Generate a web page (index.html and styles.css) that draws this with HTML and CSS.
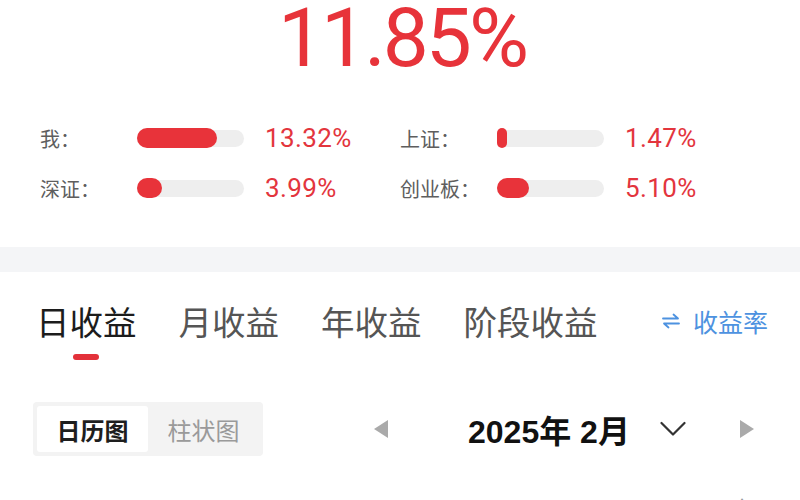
FILE: index.html
```html
<!DOCTYPE html>
<html lang="zh-CN">
<head>
<meta charset="utf-8">
<link rel="stylesheet" href="styles.css">
</head>
<body>
<div class="page">
  <section class="hero">
    <div class="big">11.85%</div>
    <div class="stats">
      <div class="stat">
        <span class="label">我：</span>
        <span class="track"><span class="fill" style="width:80px"></span></span>
        <span class="value">13.32%</span>
      </div>
      <div class="stat">
        <span class="label">上证：</span>
        <span class="track"><span class="fill" style="width:10px"></span></span>
        <span class="value">1.47%</span>
      </div>
      <div class="stat">
        <span class="label">深证：</span>
        <span class="track"><span class="fill" style="width:25px"></span></span>
        <span class="value">3.99%</span>
      </div>
      <div class="stat">
        <span class="label">创业板：</span>
        <span class="track"><span class="fill" style="width:32px"></span></span>
        <span class="value">5.10%</span>
      </div>
    </div>
  </section>
  <div class="band"></div>
  <section class="tabs">
    <div class="tab active">日收益<span class="indicator"></span></div>
    <div class="tab">月收益</div>
    <div class="tab">年收益</div>
    <div class="tab">阶段收益</div>
    <div class="switch">
      <svg class="swap" width="20" height="16" viewBox="0 0 20 16">
        <path d="M2 5.5 H17 L12.5 1.5" fill="none" stroke="currentColor" stroke-width="1.8" stroke-linecap="round" stroke-linejoin="round"/>
        <path d="M18 10.5 H3 L7.5 14.5" fill="none" stroke="currentColor" stroke-width="1.8" stroke-linecap="round" stroke-linejoin="round"/>
      </svg>
      <span>收益率</span>
    </div>
  </section>
  <section class="toolbar">
    <div class="segment">
      <div class="seg active">日历图</div>
      <div class="seg">柱状图</div>
    </div>
    <div class="nav">
      <svg class="tri" width="14" height="18" viewBox="0 0 14 18"><path d="M14 0 V18 L0 9 Z" fill="#aaaaaa"/></svg>
      <div class="month">2025年 2月</div>
      <svg class="chev" width="26" height="16" viewBox="0 0 26 16"><path d="M1.5 2 L13 13.5 L24.5 2" fill="none" stroke="#333" stroke-width="2.2" stroke-linejoin="round" stroke-linecap="round"/></svg>
      <svg class="tri" width="14" height="18" viewBox="0 0 14 18"><path d="M0 0 V18 L14 9 Z" fill="#aaaaaa"/></svg>
    </div>
  </section>
  <section class="weekdays">
    <span>日</span><span>一</span><span>二</span><span>三</span><span>四</span><span>五</span><span>六</span>
  </section>
</div>
</body>
</html>
```
FILE: styles.css
```css
html, body {
  margin: 0;
  padding: 0;
  background: #ffffff;
}
body {
  font-family: "Noto Sans CJK SC", "Noto Sans", sans-serif;
  width: 800px;
  height: 500px;
  overflow: hidden;
}
.page {
  display: flex;
  flex-direction: column;
}
.hero {
  height: 247px;
  box-sizing: border-box;
  padding-top: 2px;
}
.big {
  font-family: Roboto, "Liberation Sans", sans-serif;
  font-size: 82px;
  line-height: 72px;
  letter-spacing: -3px;
  color: #e7333a;
  text-align: center;
  padding-left: 4px;
}
.stats {
  margin-top: 39px;
  padding-left: 40px;
  display: grid;
  grid-template-columns: 360px 360px;
  grid-auto-rows: 50px;
}
.stat {
  display: flex;
  align-items: center;
}
.label {
  width: 97px;
  font-size: 20px;
  color: #5e5e5e;
  white-space: nowrap;
}
.track {
  width: 107px;
  height: 17px;
  border-radius: 9px;
  background: #eeeeee;
  display: flex;
  align-items: center;
}
.fill {
  height: 20px;
  border-radius: 10px;
  background: #e8333a;
}
.value {
  margin-left: 21px;
  font-family: Roboto, "Liberation Sans", sans-serif;
  font-size: 26px;
  color: #e3353d;
  letter-spacing: 0.4px;
}
.band {
  height: 25px;
  background: #f4f5f7;
}
.tabs {
  display: flex;
  align-items: flex-start;
  gap: 42px;
  padding: 29px 32px 0 36px;
  height: 88px;
}
.tab {
  font-size: 33.5px;
  line-height: 40px;
  color: #555555;
  display: flex;
  flex-direction: column;
  align-items: center;
}
.tab.active {
  color: #1c1c1c;
}
.indicator {
  margin-top: 13px;
  width: 26px;
  height: 6px;
  border-radius: 3px;
  background: #e3313a;
}
.switch {
  margin-left: auto;
  display: flex;
  align-items: center;
  gap: 12px;
  height: 40px;
  color: #4d92e0;
  font-size: 25px;
}
.swap {
  display: block;
}
.toolbar {
  margin-top: 13px;
  display: flex;
  align-items: center;
  padding-left: 33px;
  height: 54px;
}
.segment {
  display: flex;
  background: #f3f3f3;
  border-radius: 4px;
  padding: 4px;
  height: 54px;
  box-sizing: border-box;
}
.seg {
  width: 111px;
  display: flex;
  align-items: center;
  justify-content: center;
  font-size: 24px;
  color: #9a9a9a;
  border-radius: 3px;
}
.seg.active {
  background: #ffffff;
  color: #1e1e1e;
  font-weight: 700;
}
.nav {
  margin-left: 111px;
  display: flex;
  align-items: center;
}
.month {
  margin-left: 80px;
  font-family: "Liberation Sans", "Noto Sans CJK SC", sans-serif;
  font-weight: 700;
  font-size: 32px;
  color: #111111;
  white-space: nowrap;
}
.chev {
  margin-left: 30px;
  display: block;
}
.chev + .tri {
  margin-left: 54px;
}
.tri {
  display: block;
}
.weekdays {
  margin-top: 38px;
  display: grid;
  grid-template-columns: repeat(7, 1fr);
  font-size: 20px;
  line-height: 28px;
  color: #999999;
  text-align: center;
}
```
